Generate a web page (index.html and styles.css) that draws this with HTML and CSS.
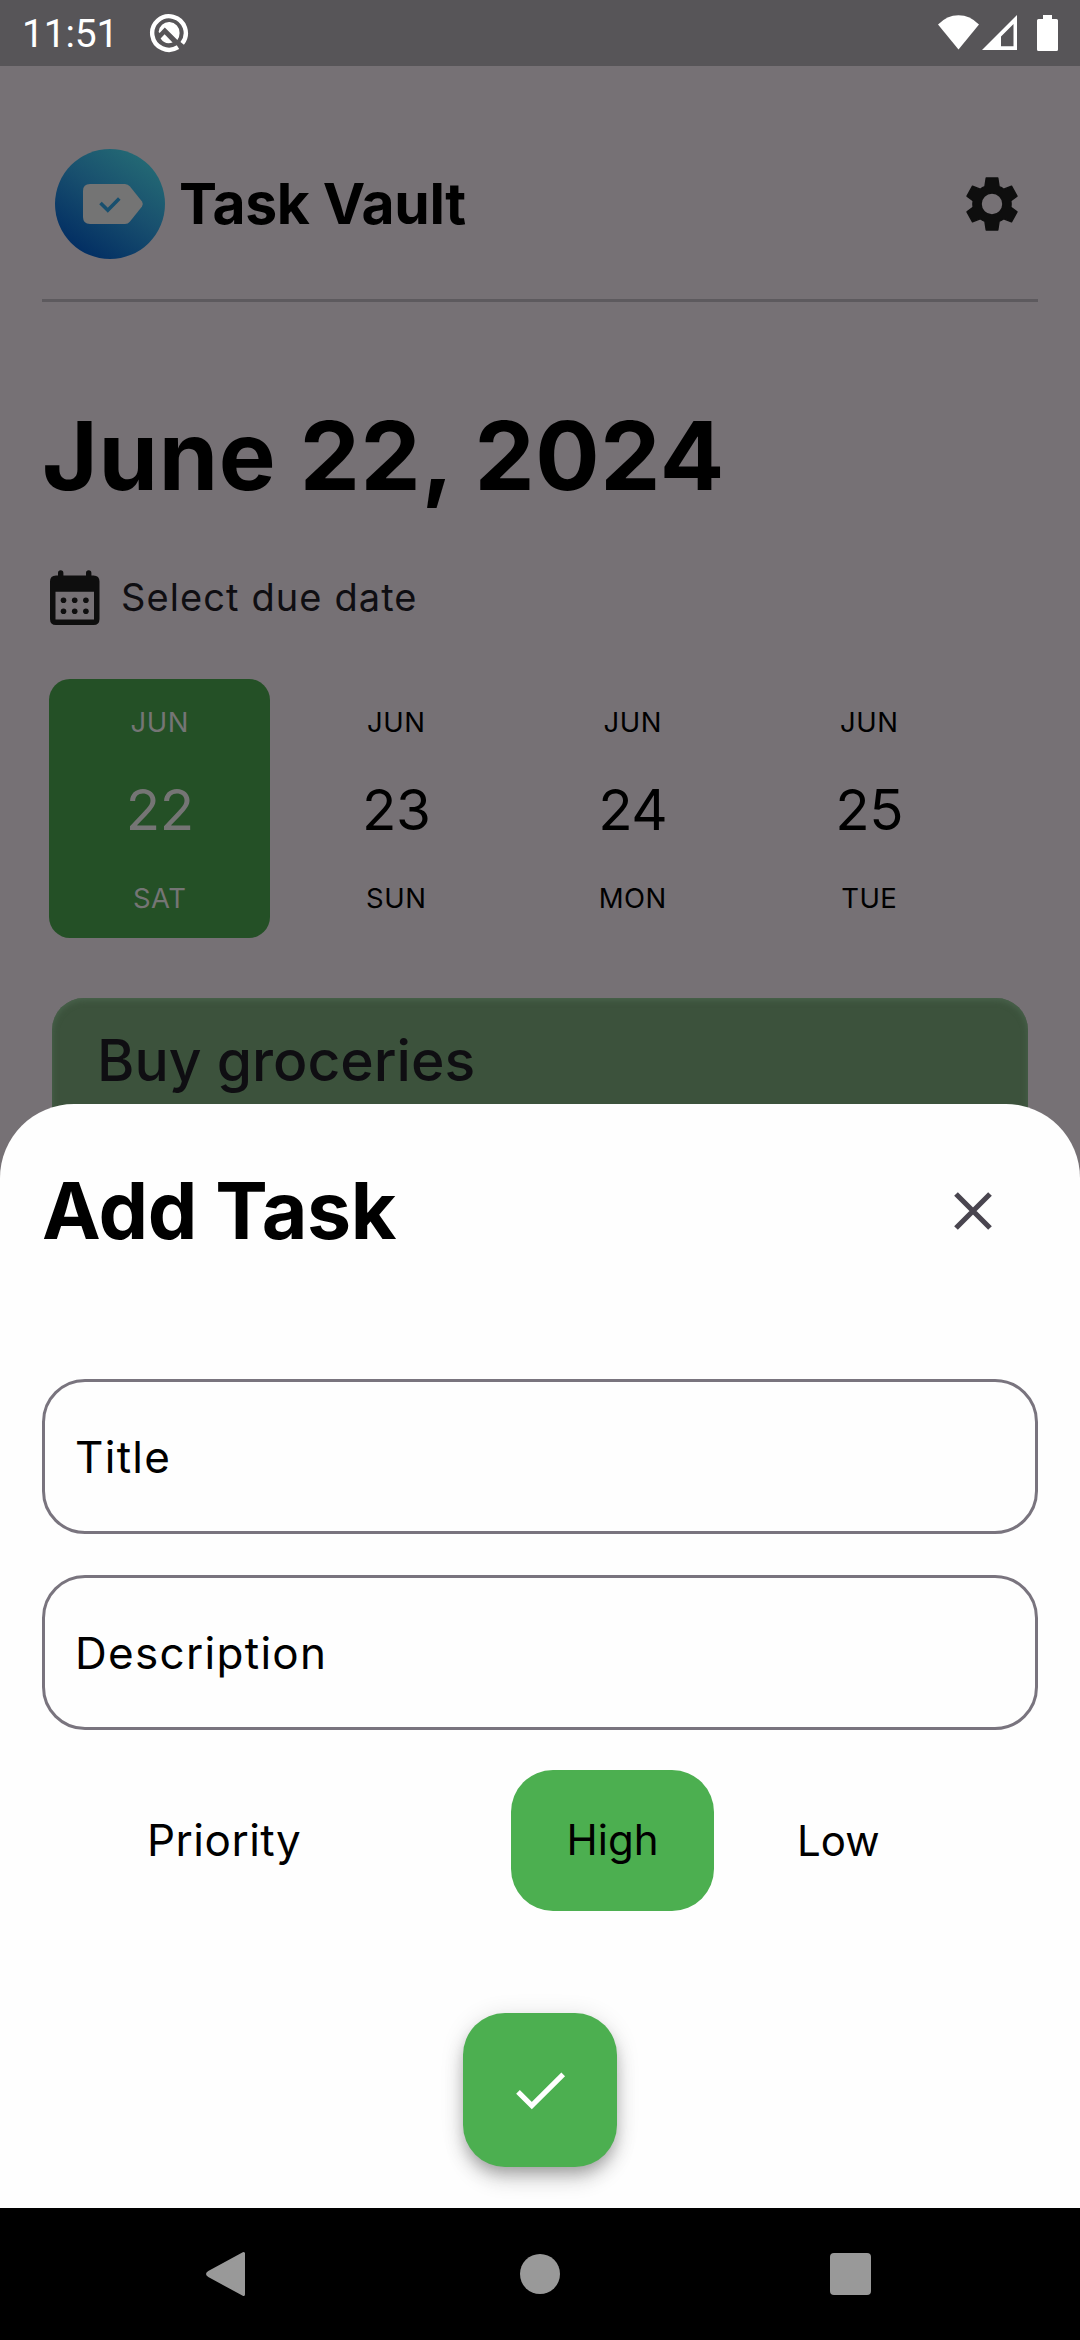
FILE: index.html
```html
<!DOCTYPE html>
<html lang="en">
<head>
<meta charset="utf-8">
<title>Task Vault</title>
<link rel="stylesheet" href="styles.css">
</head>
<body>
<div class="screen">
  <div class="status-bar">
    <span class="clock">11:51</span>
    <svg class="status-app" width="40" height="40" viewBox="-20 -20 40 40">
      <path d="M13.200 10.400A16.800 16.800 0 1 0 9 14.200" fill="none" stroke="#fff" stroke-width="4.400"/>
      <path d="M-10.400-1A10.400 10.400 0 0 1 10.600 0Q10.600 4 8.400 7L-4.200-5.400L-9.400 0Z" fill="#fff"/>
      <path d="M-8.400 5.400L-4.400 1.300L3.600 9.400Q-4 12-8.400 5.400Z" fill="#fff"/>
    </svg>
    <svg class="status-icons" width="122" height="38" viewBox="937 14 122 38" fill="#fff">
      <path d="M938 24.500Q947 15.200 958.500 15.200Q970 15.200 979 24.500L958.500 49.500Z"/>
      <path fill-rule="evenodd" d="M982 50L1017 15V50ZM1001 36.500V46.200H1013.500V24Z"/>
      <path d="M1043 15H1052V19H1056.500Q1058 19 1058 20.500V49.500Q1058 51 1056.500 51H1038.500Q1037 51 1037 49.500V20.500Q1037 19 1038.500 19H1043Z"/>
    </svg>
  </div>

  <div class="home">
    <header class="app-header">
      <svg class="logo" width="110" height="110" viewBox="0 0 110 110">
        <defs>
          <linearGradient id="logo-fill" x1="0.2" y1="0.92" x2="0.78" y2="0.08">
            <stop offset="0" stop-color="#022e63"/>
            <stop offset="0.55" stop-color="#184f6e"/>
            <stop offset="1" stop-color="#236874"/>
          </linearGradient>
        </defs>
        <circle cx="55" cy="55" r="55" fill="url(#logo-fill)"/>
        <path d="M35 35H70Q73 35 75 37.500L87 52.500Q88.600 55 87 57.500L75 72.500Q73 75 70 75H35Q28 75 28 68V42Q28 35 35 35Z" fill="#747474"/>
        <path d="M45.500 54L52.800 61.300L64.300 49.500" fill="none" stroke="#184f6e" stroke-width="3.600"/>
      </svg>
      <span class="app-name">Task Vault</span>
      <svg class="settings" width="54" height="56" viewBox="-27 -28 54 56">
        <path fill="#0e0e0e" fill-rule="evenodd" stroke="#0e0e0e" stroke-width="1.400" stroke-linejoin="round" d="M-5.800-26H5.800L7.100-17.300Q9.500-16.500 11.800-14.800L19.500-17.800L25-7.800L18.900-3.200Q19.300 0 18.900 3.200L25 7.800L19.500 17.800L11.800 14.800Q9.500 16.500 7.100 17.300L5.800 26H-5.800L-7.100 17.300Q-9.500 16.500-11.800 14.800L-19.500 17.800L-25 7.800L-18.900 3.200Q-19.300 0-18.900-3.200L-25-7.800L-19.500-17.800L-11.800-14.800Q-9.500-16.500-7.100-17.300ZM-10.900 0A10.900 10.900 0 1 0 10.900 0A10.900 10.900 0 1 0-10.900 0Z"/>
      </svg>
    </header>

    <h1 class="date-title">June 22, 2024</h1>

    <div class="due">
      <svg width="50" height="56" viewBox="0 0 50 56">
        <path fill="#0e0e0e" fill-rule="evenodd" d="M6 5.500H8V3Q8 0.200 10.700 0.200T13.400 3V5.500H36V3Q36 0.200 38.700 0.200T41.400 3V5.500H43.500Q49.500 5.500 49.500 11.500V49Q49.500 55 43.500 55H6Q0 55 0 49V11.500Q0 5.500 6 5.500ZM5.500 21.700V49.500H44V21.700Z"/>
        <g fill="#0e0e0e">
          <circle cx="13.500" cy="30.200" r="2.800"/><circle cx="24.700" cy="30.200" r="2.800"/><circle cx="35.900" cy="30.200" r="2.800"/>
          <circle cx="13.500" cy="41.200" r="2.800"/><circle cx="24.700" cy="41.200" r="2.800"/><circle cx="35.900" cy="41.200" r="2.800"/>
        </g>
      </svg>
      <span class="due-label">Select due date</span>
    </div>

    <div class="days">
      <div class="day day-selected"><span class="day-small">JUN</span><span class="day-num">22</span><span class="day-small">SAT</span></div>
      <div class="day"><span class="day-small">JUN</span><span class="day-num">23</span><span class="day-small">SUN</span></div>
      <div class="day"><span class="day-small">JUN</span><span class="day-num">24</span><span class="day-small">MON</span></div>
      <div class="day"><span class="day-small">JUN</span><span class="day-num">25</span><span class="day-small">TUE</span></div>
    </div>

    <div class="task"><span class="task-title">Buy groceries</span></div>
  </div>

  <section class="sheet">
    <div class="sheet-head">
      <h2 class="sheet-title">Add Task</h2>
      <svg class="close" width="38" height="38" viewBox="-19 -19 38 38">
        <path d="M-17-17L17 17M17-17L-17 17" stroke="#49454f" stroke-width="5.200"/>
      </svg>
    </div>
    <div class="field"><span class="field-label">Title</span></div>
    <div class="field"><span class="field-label">Description</span></div>
    <div class="priority">
      <span class="priority-label">Priority</span>
      <span class="choice choice-on">High</span>
      <span class="choice choice-low">Low</span>
    </div>
    <div class="fab">
      <svg width="52" height="42" viewBox="0 0 52 42">
        <path d="M4 22.900L17.800 36.700L49.200 5.400" fill="none" stroke="#fff" stroke-width="5.200"/>
      </svg>
    </div>
  </section>

  <nav class="nav-bar">
    <svg class="nav-back" width="40" height="46" viewBox="0 0 40 46"><path d="M3 21.300L37.500 2.500V43.500L3 24.700Q0 23 3 21.300Z" fill="#999" stroke="#999" stroke-width="3" stroke-linejoin="round"/></svg>
    <span class="nav-home"></span>
    <span class="nav-recent"></span>
  </nav>
</div>
</body>
</html>
```

FILE: styles.css
```css
* { box-sizing: border-box; }

body {
  margin: 0;
  font-family: Inter, sans-serif;
  color: #000;
}

.screen {
  position: relative;
  display: flex;
  flex-direction: column;
  width: 1080px;
  height: 2340px;
  overflow: hidden;
  background: #767175;
}

svg { display: block; flex: none; }
h1, h2 { margin: 0; font-weight: 700; }
span, h1, h2 { white-space: nowrap; }

/* Status bar */
.status-bar {
  flex: none;
  display: flex;
  align-items: center;
  height: 66px;
  padding: 0 21px 0 22px;
  background: #575558;
}
.clock {
  width: 127px;
  padding-top: 2px;
  color: #fff;
  font: 400 39px/66px Roboto, sans-serif;
  letter-spacing: -.200px;
}
.status-icons { margin-left: auto; }

/* Dimmed home screen */
.home {
  flex: 1;
  display: flex;
  flex-direction: column;
  padding: 0 42px;
}
.app-header {
  display: flex;
  align-items: center;
  height: 236px;
  padding: 42px 19px 0 13px;
  border-bottom: 3px solid #5d5a5e;
}
.app-name {
  margin-left: 14px;
  font-size: 57px;
  font-weight: 700;
  letter-spacing: -.350px;
}
.settings { margin-left: auto; }
.date-title {
  margin-top: 97px;
  font-size: 95.500px;
  line-height: 112px;
  letter-spacing: .700px;
}
.due {
  display: flex;
  align-items: center;
  gap: 21px;
  margin: 59px 0 0 8px;
  height: 56px;
}
.due-label {
  margin-top: -2px;
  color: #0f0e12;
  font-size: 38px;
  letter-spacing: 1.100px;
}
.days {
  display: flex;
  gap: 16px;
  margin: 53px 0 0 7px;
}
.day {
  flex: none;
  display: flex;
  flex-direction: column;
  justify-content: space-between;
  align-items: center;
  width: 220.500px;
  height: 259px;
  padding: 25px 0 22px 1px;
  border-radius: 21px;
}
.day-selected { background: #245026; color: #757575; }
.day-small { font-size: 27.500px; line-height: 36px; letter-spacing: .500px; }
.day-num { font-size: 56.500px; line-height: 70px; letter-spacing: -.500px; }
.task {
  height: 200px;
  margin: 60px 10px 0;
  padding: 28px 45px;
  border-radius: 32px;
  background: #3c523c;
  box-shadow: inset 0 2px 6px #4b644e;
}
.task-title {
  display: block;
  color: #0f0e12;
  font-size: 57px;
  line-height: 70px;
  font-weight: 500;
}

/* Bottom sheet over the home screen */
.sheet {
  position: absolute;
  left: 0;
  right: 0;
  bottom: 132px;
  height: 1104px;
  padding: 0 42px;
  display: flex;
  flex-direction: column;
  border-radius: 74px 74px 0 0;
  background: #fefefe;
}
.sheet-head {
  display: flex;
  justify-content: space-between;
  align-items: center;
  height: 213px;
  margin-bottom: 62px;
  padding-right: 46px;
}
.sheet-title { font-size: 78.750px; letter-spacing: -.400px; }
.field {
  display: flex;
  align-items: center;
  height: 155px;
  margin-bottom: 40.500px;
  padding: 1px 0 0 30px;
  border: 3px solid #79747e;
  border-radius: 43px;
}
.field-label { font-size: 44px; letter-spacing: 1.300px; }
.priority {
  display: flex;
  align-items: center;
  height: 141px;
  padding-left: 105px;
}
.priority-label { width: 364px; padding-bottom: 2px; font-size: 44px; letter-spacing: .500px; }
.choice { font-size: 42px; line-height: 140px; }
.choice-on {
  width: 203px;
  height: 141px;
  text-align: center;
  border-radius: 42px;
  background: #4caf50;
}
.choice-low { margin-left: 83px; }
.fab {
  display: flex;
  align-items: center;
  justify-content: center;
  width: 154px;
  height: 154px;
  margin: 102px auto 0;
  border-radius: 42px;
  background: #4caf50;
  box-shadow: 0 8px 13px -3px rgba(0,0,0,.2), 0 14px 20px rgba(0,0,0,.14), 0 3px 24px rgba(0,0,0,.12);
}

/* System navigation */
.nav-bar {
  flex: none;
  display: flex;
  align-items: center;
  height: 132px;
  padding-left: 206px;
  background: #000;
}
.nav-home { width: 40px; height: 40px; margin: 0 270px 0 274px; border-radius: 50%; background: #999; }
.nav-recent { width: 41px; height: 42px; border-radius: 4px; background: #999; }
```
